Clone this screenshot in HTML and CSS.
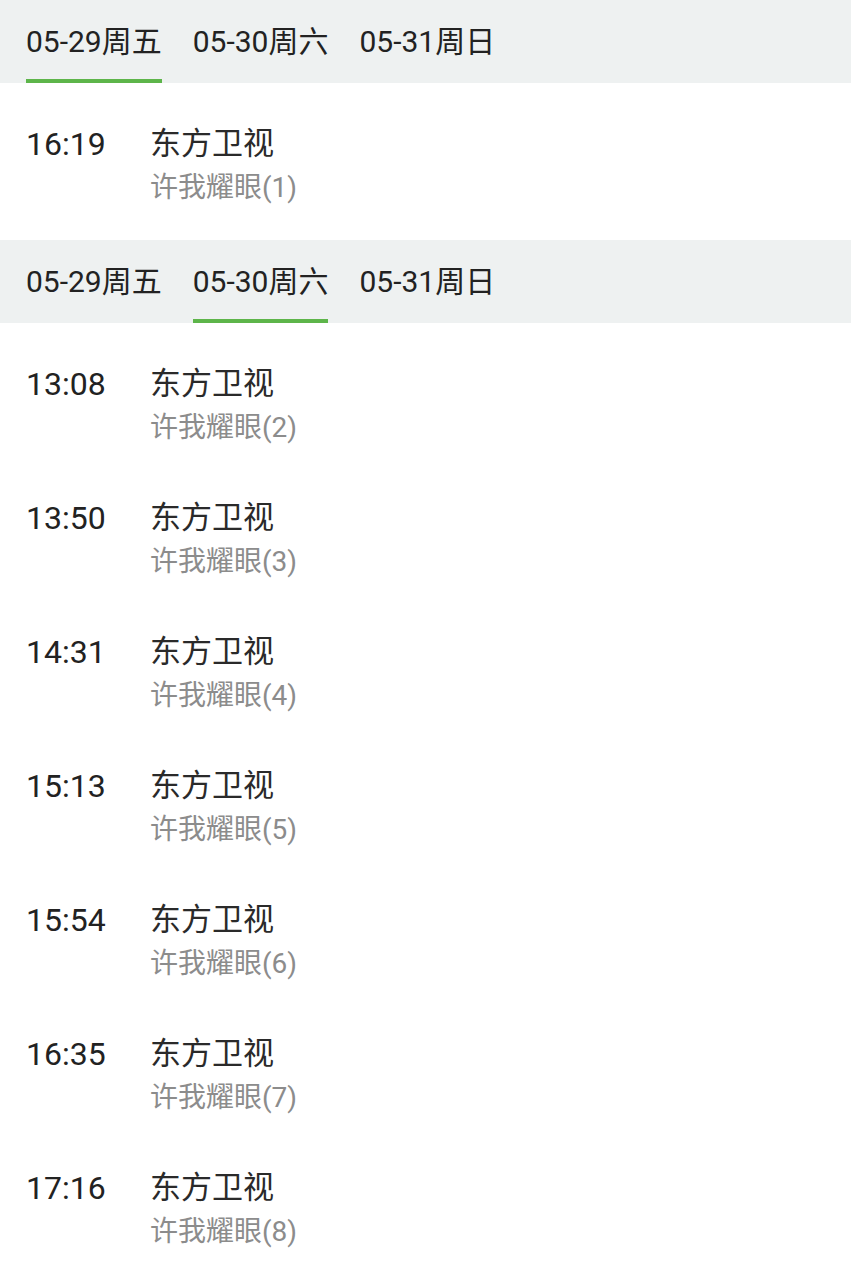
FILE: index.html
```html
<!DOCTYPE html>
<html lang="zh-CN">
<head>
  <meta charset="UTF-8">
  <title>节目单</title>
  <meta name="viewport" content="width=device-width, initial-scale=1.0" />
  <link rel="stylesheet" href="styles.css">
</head>
<body>
  <section class="day">
    <nav class="tabs">
      <span class="tab active">05-29周五</span>
      <span class="tab">05-30周六</span>
      <span class="tab">05-31周日</span>
    </nav>
    <ul class="list">
      <li class="item">
        <span class="time">16:19</span>
        <div class="info">
          <div class="channel">东方卫视</div>
          <div class="show">许我耀眼(1)</div>
        </div>
      </li>
    </ul>
  </section>

  <section class="day">
    <nav class="tabs">
      <span class="tab">05-29周五</span>
      <span class="tab active">05-30周六</span>
      <span class="tab">05-31周日</span>
    </nav>
    <ul class="list">
      <li class="item">
        <span class="time">13:08</span>
        <div class="info">
          <div class="channel">东方卫视</div>
          <div class="show">许我耀眼(2)</div>
        </div>
      </li>
      <li class="item">
        <span class="time">13:50</span>
        <div class="info">
          <div class="channel">东方卫视</div>
          <div class="show">许我耀眼(3)</div>
        </div>
      </li>
      <li class="item">
        <span class="time">14:31</span>
        <div class="info">
          <div class="channel">东方卫视</div>
          <div class="show">许我耀眼(4)</div>
        </div>
      </li>
      <li class="item">
        <span class="time">15:13</span>
        <div class="info">
          <div class="channel">东方卫视</div>
          <div class="show">许我耀眼(5)</div>
        </div>
      </li>
      <li class="item">
        <span class="time">15:54</span>
        <div class="info">
          <div class="channel">东方卫视</div>
          <div class="show">许我耀眼(6)</div>
        </div>
      </li>
      <li class="item">
        <span class="time">16:35</span>
        <div class="info">
          <div class="channel">东方卫视</div>
          <div class="show">许我耀眼(7)</div>
        </div>
      </li>
      <li class="item">
        <span class="time">17:16</span>
        <div class="info">
          <div class="channel">东方卫视</div>
          <div class="show">许我耀眼(8)</div>
        </div>
      </li>
    </ul>
  </section>
</body>
</html>
```

FILE: styles.css
```css
body {
  margin: 0;
  font-family: Roboto, "Noto Sans CJK SC", sans-serif;
  background: #fff;
  color: #222;
}

.tabs {
  display: flex;
  gap: 31px;
  height: 83px;
  padding: 0 26px;
  background: #eef1f1;
  box-sizing: border-box;
}

.tab {
  display: flex;
  align-items: center;
  padding-bottom: 2px;
  border-bottom: 4px solid transparent;
  font-size: 30px;
  color: #222;
}

.tab.active {
  border-bottom-color: #5db54a;
}

.list {
  list-style: none;
  margin: 0;
  padding: 16px 0 7px;
}

.item {
  display: flex;
  height: 134px;
  padding: 25px 26px;
  box-sizing: border-box;
}

.time {
  width: 124px;
  font-size: 32px;
  line-height: 40px;
  color: #222;
}

.channel {
  font-size: 31px;
  line-height: 40px;
  color: #2a2a2a;
}

.show {
  margin-top: 4px;
  font-size: 28px;
  line-height: 40px;
  color: #8c8c8c;
}
```
